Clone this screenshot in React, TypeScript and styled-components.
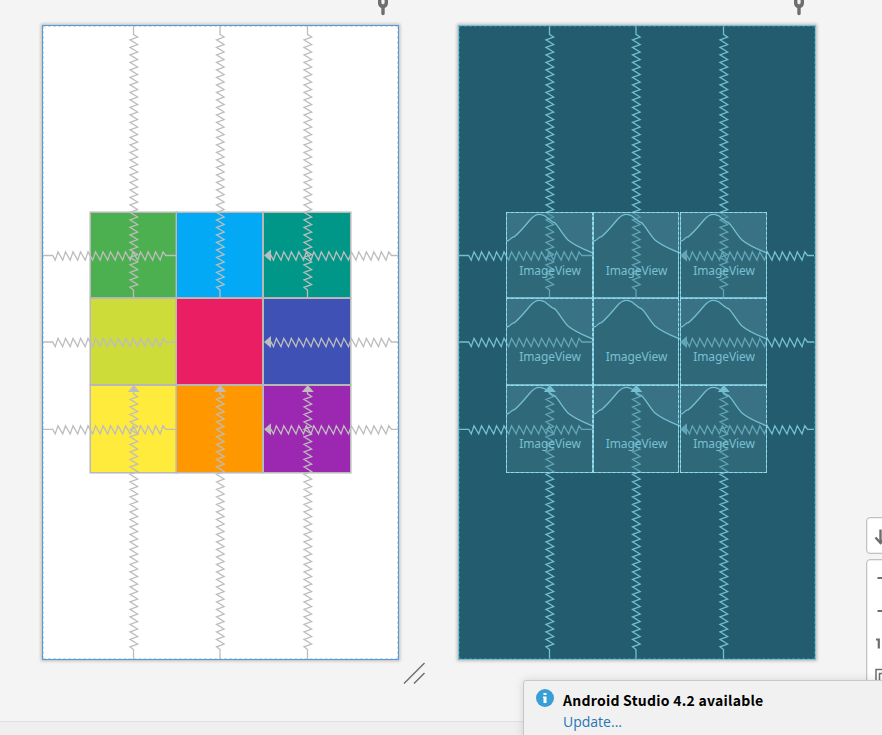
import React from 'react';
import styled, { createGlobalStyle, css } from 'styled-components';

type Mode = 'design' | 'blueprint';

const GlobalStyle = createGlobalStyle`
  *, *::before, *::after { box-sizing: border-box; }
  body {
    margin: 0;
    background: #f4f4f4;
    font-family: "Open Sans", "Noto Sans", sans-serif;
    overflow: hidden;
  }
`;

const Editor = styled.main`
  position: relative;
  display: flex;
  flex-direction: column;
  width: 882px;
  height: 735px;
  background: #f4f4f4;
  overflow: hidden;
`;

const Surfaces = styled.section`
  flex: 1;
  display: flex;
  align-items: flex-start;
  gap: 59px;
  padding-left: 42px;
`;

const StatusBar = styled.footer`
  height: 14px;
  background: #efefef;
  border-top: 1px solid #dfdfdf;
`;

const Surface = styled.div<{ $mode: Mode }>`
  display: flex;
  flex-direction: column;
  width: ${(p) => (p.$mode === 'design' ? 357 : 358)}px;
`;

const SurfaceHeader = styled.div`
  height: 25px;
  padding-left: 335px;
`;

const Screen = styled.div<{ $mode: Mode }>`
  position: relative;
  height: 635px;
  padding: 186px 0 0 47px;
  border: 1px solid ${(p) => (p.$mode === 'design' ? '#5a9bd5' : '#79bfd2')};
  background: ${(p) => (p.$mode === 'design' ? '#ffffff' : '#235c6e')};
  box-shadow: 0 0 3px 1px rgba(0, 0, 0, 0.24);

  &::after {
    content: '';
    position: absolute;
    inset: 0;
    border: 1px dashed ${(p) => (p.$mode === 'design' ? '#a5c5e3' : '#4c95a9')};
    opacity: 0.55;
  }
`;

const TileGrid = styled.div<{ $mode: Mode }>`
  position: relative;
  z-index: 1;
  display: grid;
  grid-template-columns: 87px 87px 87px;
  grid-template-rows: 86px 87px 88px;
  width: 261px;
  background: ${(p) => (p.$mode === 'design' ? '#b9b9b9' : 'transparent')};
`;

const Tile = styled.div<{ $mode: Mode; $color: string }>`
  position: relative;
  display: flex;
  justify-content: center;

  ${(p) =>
    p.$mode === 'design'
      ? css`
          background: ${p.$color};
          border: 1px solid #b9b9b9;
          box-shadow: 0 0 0 0.5px #b4b4b4;

          &:nth-child(3n + 2) {
            margin: 0 1px 0 -1px;
          }

          &:nth-child(3n) {
            margin-left: -1px;
          }
        `
      : css`
          background: rgba(69, 123, 139, 0.38);
          border: 1px solid #74bdd1;

          &:nth-child(3n + 2) {
            margin-right: 1px;
          }

          &::after {
            content: '';
            position: absolute;
            inset: -1px;
            border: 1px dashed #92d9ea;
          }

          &:nth-child(-n + 6)::after {
            bottom: -2px;
          }
        `}
`;

const Curve = styled.svg`
  position: absolute;
  left: -1px;
  top: -1px;
`;

const TileLabel = styled.span`
  position: relative;
  margin-top: 50px;
  padding-left: 1px;
  font: 12px/16px "Noto Sans", sans-serif;
  letter-spacing: -0.1px;
  color: #79c0d2;
`;

const SpringLayer = styled.svg<{ $mode: Mode; $raised?: boolean }>`
  position: absolute;
  left: -1px;
  top: -1px;
  z-index: ${(p) => (p.$raised ? 2 : 0)};
  color: ${(p) => (p.$mode === 'design' ? '#bdbdbd' : '#74bfd2')};
`;

const ResizeHandle = styled.svg`
  position: absolute;
  left: 403px;
  top: 662px;
`;

const ZoomControls = styled.aside`
  position: absolute;
  left: 866px;
  top: 517px;
  display: flex;
  flex-direction: column;
  gap: 5px;
`;

const ControlGroup = styled.div<{ $height: number }>`
  width: 37px;
  height: ${(p) => p.$height}px;
  border: 1px solid #c2c2c2;
  border-radius: 4px;
  background: #fff;
  box-shadow: inset 0 0 0 0.5px #dcdcdc;
`;

const Notification = styled.aside`
  position: absolute;
  left: 523px;
  top: 680px;
  display: flex;
  gap: 9px;
  width: 380px;
  height: 80px;
  padding: 8px 12px;
  border: 1px solid #c8c8c8;
  border-radius: 3px;
  background: #f1f1f1;
  box-shadow: 0 0 10px rgba(0, 0, 0, 0.13);
  z-index: 3;
`;

const NotificationBody = styled.div`
  display: flex;
  flex-direction: column;
`;

const NotificationTitle = styled.strong`
  font: 700 14px/22px "Noto Sans CJK KR", "Open Sans", sans-serif;
  letter-spacing: 0.25px;
  color: #000;
  white-space: nowrap;
`;

const NotificationLink = styled.a`
  font: 14px/21px "Open Sans", sans-serif;
  color: #2675b5;
`;

const tiles = [
  '#4caf50', '#03a9f4', '#009688',
  '#cddc39', '#e91e63', '#3f51b5',
  '#ffeb3b', '#ff9800', '#9c27b0',
];

const PERIOD = 7.5;
const COLUMNS = [91, 177.5, 265];
const ROWS = [230.5, 317, 404.3];

/** Zigzag running down the page, `first` being the y of the first right-hand tip. */
function verticalSpring(x: number, start: number, first: number, count: number, end: number) {
  let d = `M${x + 0.5} ${start}V${first - 2.7}`;
  for (let i = 0; i < count; i += 1) {
    const y = first + i * PERIOD;
    d += `L${x + 4.6} ${y}L${x - 3} ${y + 2.8}`;
  }
  const last = first + count * PERIOD - 2;
  return `${d}L${x + 0.5} ${last}V${end}`;
}

/** Zigzag running across the page, `first` being the x of the first lower tip. */
function horizontalSpring(y: number, start: number, first: number, count: number, end: number) {
  let d = `M${start} ${y}H${first - 2.5}`;
  for (let i = 0; i < count; i += 1) {
    const x = first + i * PERIOD;
    d += `L${x} ${y + 4.6}L${x + 2.8} ${y - 3.6}`;
  }
  return `${d}L${first + count * PERIOD - 2} ${y}H${end}`;
}

function Springs({ mode }: { mode: Mode }) {
  return (
    <SpringLayer
      $mode={mode}
      $raised={mode === 'design'}
      width="357"
      height="635"
      fill="none"
      stroke="currentColor"
      strokeWidth="1.3"
    >
      {COLUMNS.map((x) => (
        <React.Fragment key={x}>
          <path d={verticalSpring(x, 1, 12, 34, 272)} />
          <path d={verticalSpring(x, 366, 371.5, 34, 634)} />
        </React.Fragment>
      ))}
      {ROWS.map((y) => (
        <React.Fragment key={y}>
          <path d={horizontalSpring(y, 1, 13.2, 15, 134)} />
          <path d={horizontalSpring(y, 228, 231.5, 16, 356)} />
          <path d={`M222 ${y}L229 ${y - 6}V${y + 6}Z`} fill="currentColor" stroke="none" />
        </React.Fragment>
      ))}
    </SpringLayer>
  );
}

/** Arrow heads that end the lower vertical springs; drawn over the tiles in both modes. */
function ArrowHeads({ mode }: { mode: Mode }) {
  return (
    <SpringLayer $mode={mode} $raised width="357" height="635" fill="currentColor">
      {COLUMNS.map((x) => (
        <path key={x} d={`M${x + 0.8} 360L${x + 6.8} 367H${x - 5.2}Z`} />
      ))}
    </SpringLayer>
  );
}

const curvePath =
  'M1 29C4 29 6 24 8 25C12 22 19 14 24 8C29 2 34 1 39 4C43 7 45 10 49 11C53 15 57 23 62 28C69 34 77 37 87 41';

function PinIcon() {
  return (
    <svg width="12" height="17" viewBox="0 0 12 17" fill="none">
      <path d="M1 0V3C1 5.6 2.4 7.4 4.3 8V13.8Q4.3 15.2 6 15.2T7.7 13.8V8C9.6 7.4 11 5.6 11 3V0H7.6V3.2L6 4.4L4.4 3.2V0Z" fill="#6e6e6e" />
    </svg>
  );
}

function DeviceSurface({ mode }: { mode: Mode }) {
  return (
    <Surface $mode={mode}>
      <SurfaceHeader>
        <PinIcon />
      </SurfaceHeader>
      <Screen $mode={mode}>
        <TileGrid $mode={mode}>
          {tiles.map((color) => (
            <Tile key={color} $mode={mode} $color={color}>
              {mode === 'blueprint' && (
                <>
                  <Curve width="87" height="87" fill="none">
                    <path d={`${curvePath}V1H1Z`} fill="#498398" fillOpacity=".4" />
                    <path d={curvePath} stroke="#73bed1" strokeWidth="1.3" />
                  </Curve>
                  <TileLabel>ImageView</TileLabel>
                </>
              )}
            </Tile>
          ))}
        </TileGrid>
        <Springs mode={mode} />
        <ArrowHeads mode={mode} />
      </Screen>
    </Surface>
  );
}

export default function App() {
  return (
    <>
      <GlobalStyle />
      <Editor>
        <Surfaces>
          <DeviceSurface mode="design" />
          <DeviceSurface mode="blueprint" />
        </Surfaces>
        <StatusBar />
        <ResizeHandle width="24" height="24" stroke="#6c6c6c" strokeWidth="1.4">
          <path d="M1 21.5L21.5 1M11 21.5L21.5 11" />
        </ResizeHandle>
        <ZoomControls>
          <ControlGroup $height={37}>
            <svg width="36" height="35" fill="none" stroke="#6e6e6e" strokeWidth="2.4">
              <path d="M13.5 11.5V24.5M8.5 19.5L13.5 25L18.5 19.5" />
            </svg>
          </ControlGroup>
          <ControlGroup $height={150}>
            <svg width="36" height="148" fill="none" stroke="#6e6e6e" strokeWidth="2">
              <path d="M10.5 18H22M10.5 51H22" />
              <path d="M9 79.5H11.8V88.5" strokeWidth="2.2" />
              <path d="M9 122V109.5H24M12.5 122V113.5H24" strokeWidth="1.5" />
            </svg>
          </ControlGroup>
        </ZoomControls>
        <Notification>
          <svg width="18" height="18" viewBox="0 0 18 18">
            <circle cx="9" cy="9" r="9" fill="#389fd6" />
            <path d="M7.5 4H10.5V6H7.5ZM7 7.5H10.5V14H7.5V9H7Z" fill="#fff" />
          </svg>
          <NotificationBody>
            <NotificationTitle>Android Studio 4.2 available</NotificationTitle>
            <NotificationLink>Update...</NotificationLink>
          </NotificationBody>
        </Notification>
      </Editor>
    </>
  );
}
